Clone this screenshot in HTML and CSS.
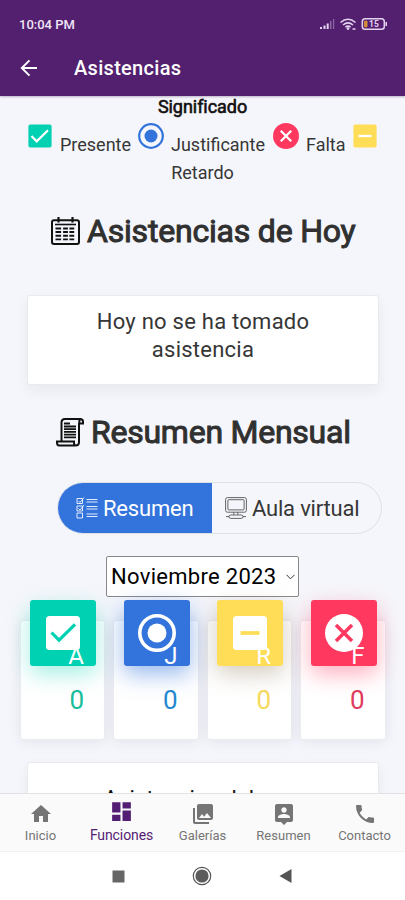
FILE: index.html
```html
<!DOCTYPE html>
<html lang="es">
<head>
<meta charset="utf-8">
<meta name="viewport" content="width=device-width">
<title>Asistencias</title>
<link rel="stylesheet" href="styles.css">
</head>
<body>
<header class="top">
  <div class="status">
    <span class="clock">10:04 PM</span>
    <svg class="status-icons" width="70" height="16" viewBox="0 0 70 16">
      <g fill="#e4d3ef"><path d="M1 11h2v2H1zM4.500 9.500h2V13h-2zM7.700 7.500h2V13h-2z"/><path d="M11 5h1.500v8H11zM14 3h1.200v10H14z" opacity=".4"/></g>
      <g fill="none" stroke="#e4d3ef" stroke-width="1.600"><path d="M21.500 6.500q7.500-6.500 15 0M24 9q5-4.300 10 0M26.400 11.200q2.600-2.200 5.200 0"/></g>
      <circle cx="29" cy="12.600" r="1.400" fill="#e4d3ef"/><path d="M33.500 12h3v2h-3z" fill="#bfa3d2"/>
      <rect x="43.300" y="2.800" width="22" height="10.400" rx="2.800" fill="none" stroke="#e4d3ef" stroke-width="1.500"/>
      <path d="M66.500 6h1.500v4h-1.500z" fill="#e4d3ef"/><rect x="45" y="4.700" width="3.500" height="6.600" rx="1" fill="#d58a3c"/>
      <text x="50" y="11.200" class="battery">15</text>
    </svg>
  </div>
  <div class="appbar">
    <svg width="18" height="18" viewBox="0 0 18 18" fill="none" stroke="#fff" stroke-width="1.900"><path d="M17 9H2M9.500 1.300 1.800 9l7.700 7.700"/></svg>
    <h1>Asistencias</h1>
  </div>
</header>

<main>
  <section class="legend">
    <h2>Significado</h2>
    <div class="legend-row">
      <svg width="24" height="24" viewBox="0 0 24 24"><rect x=".4" y=".4" width="23.200" height="23.200" rx="2" fill="#00d1b2"/><path d="m3.500 12 5.200 5.400L20 6.300" fill="none" stroke="#fff" stroke-width="2.300"/></svg>
      <span class="t-presente">Presente</span>
      <svg class="ring" width="26" height="26" viewBox="0 0 26 26"><circle cx="13" cy="13" r="11.800" fill="none" stroke="#3273dc" stroke-width="2.200"/><circle cx="13" cy="13" r="6.500" fill="#3273dc"/></svg>
      <span class="t-just">Justificante</span>
      <svg class="cross" width="26" height="26" viewBox="0 0 26 26"><circle cx="13" cy="13" r="13" fill="#ff3860"/><path d="m7.800 7.800 10.400 10.400m0-10.400L7.800 18.200" stroke="#fff" stroke-width="2.300"/></svg>
      <span class="t-falta">Falta</span>
      <svg width="24" height="24" viewBox="0 0 24 24"><rect x=".4" y=".4" width="23.200" height="23.200" rx="2" fill="#ffdd57"/><path d="M5.500 12h13" stroke="#fff" stroke-width="2.300"/></svg>
    </div>
    <p>Retardo</p>
  </section>

  <h2 class="title today">
    <svg width="29" height="28" viewBox="0 0 29 28" fill="none" stroke="#111"><rect x="1" y="3.200" width="27" height="23.800" rx="2" stroke-width="2"/><path d="M7.500 0v5.500M21.500 0v5.500" stroke-width="2.200"/><path d="M4 7.500h21" stroke-width="1.600"/><path d="M4.500 11.500h20M4.500 15h20M4.500 18.700h20M4.500 22.400h20" stroke-width="1.900" stroke-dasharray="5.600 2 4.800 1.500 4.800 1.500"/></svg>
    <span>Asistencias de Hoy</span>
  </h2>

  <div class="notice"><p>Hoy no se ha tomado asistencia</p></div>

  <h2 class="title monthly">
    <svg width="28" height="29" viewBox="0 0 28 29" fill="none" stroke="#111" stroke-width="2"><path d="M5.500 23V4.500Q5.500 1 9 1h15q3 0 3 2.500v2h-3.700V4Q23.300 1 25 1M23 5v19q0 3.500-3.500 3.500H3q-2 0-2-3v-1h17v1.500q0 2.500 2 2.500"/><path d="M8 5.500h6M8 8.500h12M8 11.200h12M8 13.900h12M8 16.600h12M8 19.300h12" stroke-width="1.800"/></svg>
    <span>Resumen Mensual</span>
  </h2>

  <div class="tabs">
    <div class="tab active">
      <svg width="22" height="22" viewBox="0 0 22 22" fill="none" stroke="#e2ecfb" stroke-width="1"><path d="M1 1.500h5.500v5H1zM1 9h5.500v5H1zM1 16h5.500v5H1zM2.500 4l1.500 1.500 4-5M2.500 11.500 4 13l4-5"/><path d="M10.500 2.500h11M10.500 5h11M10.500 9.500h11M10.500 12h11M10.500 17h11M10.500 19.500h11"/></svg>
      <span>Resumen</span>
    </div>
    <div class="tab">
      <svg width="22" height="22" viewBox="0 0 22 22" fill="none" stroke="#555" stroke-width=".9"><rect x=".6" y=".6" width="20.800" height="14.600" rx="1.800"/><rect x="2.900" y="2.700" width="16.200" height="10.200" rx=".8"/><path d="M8.800 15.200v2.600M12.800 15.200v2.600"/><path d="M1 19.600h3M18 19.600h3M5.500 18h11q1.500 0 1.500 1.700t-1.500 1.700h-11Q4 21.400 4 19.700T5.500 18z"/></svg>
      <span>Aula virtual</span>
    </div>
  </div>

  <div class="month"><span>Noviembre 2023</span><svg width="9" height="6" viewBox="0 0 9 6" fill="none" stroke="#333"><path d="m.5.8 4 4 4-4"/></svg></div>

  <div class="cards">
    <article class="card green">
      <div class="badge"><svg width="38" height="38" viewBox="0 0 38 38"><rect x="2" y="2" width="34" height="34" rx="3.500" fill="#fff"/><path d="m7.500 18.500 7.500 7.700L31 10.300" fill="none" stroke="#00d1b2" stroke-width="3.200"/></svg><span>A</span></div>
      <p>0</p>
    </article>
    <article class="card blue">
      <div class="badge"><svg width="38" height="38" viewBox="0 0 38 38"><circle cx="19" cy="19" r="17.200" fill="none" stroke="#fff" stroke-width="3.600"/><circle cx="19" cy="19" r="9.500" fill="#fff"/></svg><span>J</span></div>
      <p>0</p>
    </article>
    <article class="card yellow">
      <div class="badge"><svg width="38" height="38" viewBox="0 0 38 38"><rect x="2" y="2" width="34" height="34" rx="3.500" fill="#fff"/><path d="M9.500 19h19" stroke="#ffdd57" stroke-width="3.800"/></svg><span>R</span></div>
      <p>0</p>
    </article>
    <article class="card red">
      <div class="badge"><svg width="38" height="38" viewBox="0 0 38 38"><circle cx="19" cy="19" r="19" fill="#fff"/><path d="m11 11 16 16m0-16L11 27" stroke="#ff3860" stroke-width="3.500"/></svg><span>F</span></div>
      <p>0</p>
    </article>
  </div>

  <div class="next"><p>Asistencias del mes</p></div>
</main>

<nav>
  <a><svg width="24" height="24" viewBox="0 0 24 24"><path d="M10 20v-6h4v6h5v-8h3L12 3 2 12h3v8z"/></svg><span>Inicio</span></a>
  <a class="current"><svg width="25" height="25" viewBox="0 0 24 24"><path d="M3 13h8V3H3v10zm0 8h8v-6H3v6zm10 0h8V11h-8v10zm0-18v6h8V3h-8z"/></svg><span>Funciones</span></a>
  <a><svg width="24" height="24" viewBox="0 0 24 24"><path d="M22 16V4c0-1.100-.9-2-2-2H8c-1.100 0-2 .9-2 2v12c0 1.100.9 2 2 2h12c1.100 0 2-.9 2-2zm-11-4 2.030 2.710L16 11l4 5H8l3-4zM2 6v14c0 1.100.9 2 2 2h14v-2H4V6H2z"/></svg><span>Galerías</span></a>
  <a><svg width="24" height="24" viewBox="0 0 24 24"><path d="M19 2H5c-1.110 0-2 .9-2 2v14c0 1.100.89 2 2 2h4l3 3 3-3h4c1.100 0 2-.9 2-2V4c0-1.100-.9-2-2-2zm-7 3.300c1.490 0 2.700 1.210 2.700 2.700 0 1.490-1.210 2.700-2.700 2.700-1.490 0-2.700-1.210-2.700-2.700 0-1.490 1.210-2.700 2.700-2.700zM18 16H6v-.9c0-2 4-3.100 6-3.100s6 1.100 6 3.100v.9z"/></svg><span>Resumen</span></a>
  <a><svg width="24" height="24" viewBox="0 0 24 24"><path d="M6.620 10.790c1.440 2.830 3.760 5.140 6.590 6.590l2.200-2.200c.27-.27.67-.36 1.020-.24 1.120.37 2.330.57 3.570.57.55 0 1 .45 1 1V20c0 .55-.45 1-1 1-9.390 0-17-7.610-17-17 0-.55.45-1 1-1h3.500c.55 0 1 .45 1 1 0 1.250.2 2.450.57 3.570.11.35.03.74-.25 1.020l-2.200 2.200z"/></svg><span>Contacto</span></a>
</nav>

<footer>
  <svg width="13" height="13" viewBox="0 0 13 13"><path d="M.5.500h12v12H.5z" fill="#666"/></svg>
  <svg width="20" height="20" viewBox="0 0 20 20"><circle cx="10" cy="10" r="8.700" fill="none" stroke="#555" stroke-width="1.200"/><circle cx="10" cy="10" r="6.600" fill="#5c5c5c"/></svg>
  <svg width="13" height="14" viewBox="0 0 13 14"><path d="M12.500 0v14L.5 7z" fill="#555"/></svg>
</footer>
</body>
</html>
```
FILE: styles.css
```css
* { box-sizing: border-box; margin: 0; padding: 0; }
body {
  width: 405px; height: 900px; overflow: hidden;
  display: flex; flex-direction: column;
  font-family: Roboto, sans-serif; color: #363636; background: #f5f6fb;
}
svg { display: block; flex: none; }
span { white-space: nowrap; }

.top { height: 96px; flex: none; background: #52206f; color: #fff; z-index: 1; box-shadow: 0 1px 2px rgba(50, 20, 80, .3); }
.status { display: flex; justify-content: space-between; align-items: center; height: 48px; padding: 0 16px 0 19px; }
.clock { font-size: 13px; font-weight: 500; letter-spacing: 0; color: #f0e5f6; }
.battery { font: 700 8.500px Roboto, sans-serif; fill: #e4d3ef; }
.appbar { display: flex; align-items: center; gap: 36px; height: 39px; padding-left: 20px; }
.appbar h1 { font-size: 20px; font-weight: 500; letter-spacing: .3px; }

main { height: 697px; flex: none; overflow: hidden; }
.legend { text-align: center; font-size: 18px; line-height: 27px; }
.legend h2 { font-size: 18px; line-height: 21px; font-weight: 400; color: #111; -webkit-text-stroke: .6px #111; letter-spacing: -.05px; }
.legend-row { display: flex; height: 42px; padding: 7px 0 0 28px; line-height: 41px; }
.legend-row span { text-align: left; letter-spacing: 0; }
.legend-row .ring, .legend-row .cross { margin-top: -1px; }
.t-presente { width: 86px; padding-left: 8px; }
.t-just { width: 109px; padding-left: 7px; }
.t-falta { width: 54px; padding-left: 7px; }

.title { display: flex; align-items: center; font-size: 32px; line-height: 36px; font-weight: 400; -webkit-text-stroke: 1px #303030; color: #303030; letter-spacing: -.25px; }
.today { margin-top: 27px; padding-left: 51px; gap: 7px; }
.today span { letter-spacing: -.2px; }
.notice { margin: 46px 26px 0 27px; height: 90px; padding: 12px 60px; border: 1px solid #e9eaee; border-radius: 3px; background: #fff; text-align: center; font-size: 22px; line-height: 28px; letter-spacing: .25px; box-shadow: 0 6px 14px rgba(30, 30, 60, .06); }
.monthly { margin-top: 29px; padding-left: 56px; gap: 7px; }

.tabs { display: flex; width: 325px; height: 52px; margin: 32px 0 0 57px; border: 1px solid #dee0e6; border-radius: 26px; overflow: hidden; font-size: 22px; letter-spacing: -.2px; }
.tab { display: flex; align-items: center; flex: 1; gap: 5px; padding-left: 13px; }
.tab.active { flex: 0 0 154px; margin: -1px 0 -1px 0; padding-left: 18px; background: #3273dc; color: #fff; }

.month { display: flex; align-items: center; justify-content: space-between; width: 193px; height: 41px; margin: 22px 0 0 106px; padding: 0 3px 0 4px; border: 1px solid #888; border-radius: 2px; background: #fff; color: #000; font-size: 22px; letter-spacing: .3px; }

.cards { display: flex; gap: 8px; margin-top: 23px; padding: 0 19.500px 0 19.500px; }
.card { flex: 1; height: 120px; border: 1px solid #ececf0; border-radius: 3px; background: #fff; box-shadow: 0 2px 14px rgba(30, 30, 60, .08); }
.card p { margin-top: 17px; padding-right: 20px; text-align: right; font-size: 26px; font-weight: 400; line-height: 34px; }
.badge { position: relative; width: 66px; height: 66px; margin: -21px 0 0 9.500px; padding: 14px; border-radius: 3px; color: #fff; }
.badge span { position: absolute; right: 12px; bottom: -4px; font-size: 24px; font-weight: 400; line-height: 28px; }
.green .badge { background: #00d1b2; box-shadow: 0 8px 22px rgba(0, 209, 178, .35); }
.blue .badge { background: #3273dc; box-shadow: 0 8px 22px rgba(50, 115, 220, .5); }
.yellow .badge { background: #ffdd57; box-shadow: 0 8px 22px rgba(150, 130, 100, .4); }
.red .badge { background: #ff3860; box-shadow: 0 8px 22px rgba(255, 56, 96, .4); }
.green p { color: #19bd9b; }
.blue p { color: #2488d0; }
.yellow p { color: #f7d95c; }
.red p { color: #df3c62; }

.next { height: 89px; margin: 22px 26px 0 27px; padding-top: 20px; border: 1px solid #e9eaee; border-radius: 3px; background: #fff; text-align: center; font-size: 22px; line-height: 32px; letter-spacing: .15px; color: #111; box-shadow: 0 6px 14px rgba(30, 30, 60, .06); }

nav { display: flex; flex: none; height: 59px; padding-top: 8px; background: #fafafa; border-top: 1px solid #e2e2e4; border-bottom: 1px solid #f0f0f0; z-index: 1; }
nav a { flex: 1; display: flex; flex-direction: column; align-items: center; gap: 2px; font-size: 13px; line-height: 16px; letter-spacing: 0; color: #757575; fill: #757575; }
nav .current { margin-top: -3px; font-size: 14px; letter-spacing: -.1px; gap: 3px; color: #541d74; fill: #541d74; }

footer { flex: 1; display: flex; justify-content: center; align-items: center; gap: 67px; padding-right: 1px; background: #fff; }
```
